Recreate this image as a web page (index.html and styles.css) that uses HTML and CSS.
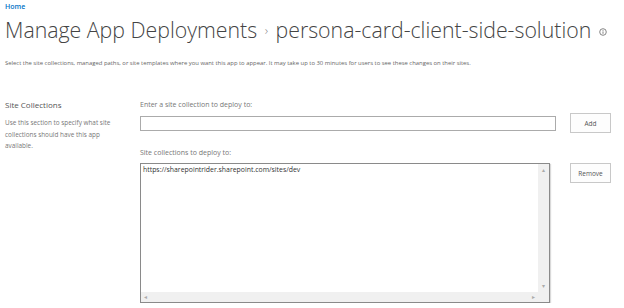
FILE: index.html
```html
<!DOCTYPE html>
<html lang="en">
<head>
    <meta charset="UTF-8">
    <title>Manage App Deployments</title>
    <link rel="stylesheet" href="styles.css">
</head>
<body>
    <div class="breadcrumb"><a href="#">Home</a></div>
    <h1 class="title">
        Manage App Deployments
        <span class="sep">&rsaquo;</span>
        persona-card-client-side-solution
        <svg class="info" width="8" height="8" viewBox="0 0 8 8">
            <circle cx="4" cy="4" r="3.3" fill="none" stroke="#777" stroke-width="0.9"/>
            <rect x="3.55" y="3.4" width="0.9" height="2.4" fill="#777"/>
            <rect x="3.55" y="2.1" width="0.9" height="0.8" fill="#777"/>
        </svg>
    </h1>
    <p class="desc">Select the site collections, managed paths, or site templates where you want this app to appear. It may take up to 30 minutes for users to see these changes on their sites.</p>

    <div class="section">
        <div class="section-info">
            <h3>Site Collections</h3>
            <p>Use this section to specify what site collections should have this app available.</p>
        </div>
        <div class="section-body">
            <label>Enter a site collection to deploy to:</label>
            <div class="row add-row">
                <input type="text" class="site-input">
                <button class="btn">Add</button>
            </div>
            <label class="second">Site collections to deploy to:</label>
            <div class="row list-row">
                <div class="listbox">
                    <div class="list-content">https://sharepointrider.sharepoint.com/sites/dev</div>
                    <div class="vbar"><span>&#9652;</span><span>&#9662;</span></div>
                    <div class="hbar"><span>&#9666;</span><span>&#9656;</span></div>
                    <div class="corner"></div>
                </div>
                <button class="btn">Remove</button>
            </div>
        </div>
    </div>
</body>
</html>
```

FILE: styles.css
```css
body {
    margin: 0;
    padding: 0 5px;
    font-family: "Open Sans", "Noto Sans", sans-serif;
    color: #444;
    background-color: white;
}
.breadcrumb {
    padding-top: 2px;
    font-size: 7px;
    line-height: 10px;
    font-weight: 600;
}
.breadcrumb a {
    color: #0072c6;
    text-decoration: none;
}
.title {
    margin: 3px 0 0;
    font-size: 21.3px;
    font-weight: 300;
    line-height: 30px;
    color: #444;
    white-space: nowrap;
}
.title .sep {
    font-size: 13px;
    color: #888;
    vertical-align: 3px;
    margin: 0 2px;
}
.title .info {
    vertical-align: 2px;
    margin-left: 2px;
}
.desc {
    margin: 13px 0 0;
    font-size: 5.9px;
    line-height: 10px;
    color: #666;
    white-space: nowrap;
}
.section {
    display: flex;
    margin-top: 32px;
}
.section-info {
    width: 135px;
    flex: none;
}
.section-info h3 {
    margin: 0;
    font-size: 8px;
    font-weight: normal;
    line-height: 10px;
    color: #555;
}
.section-info p {
    margin: 7px 0 0;
    width: 120px;
    font-size: 6.4px;
    line-height: 11.5px;
    color: #777;
}
.section-body {
    flex: 1;
}
.section-body label {
    display: block;
    font-size: 7px;
    line-height: 10px;
    color: #777;
}
.section-body label.second {
    margin-top: 15px;
}
.row {
    display: flex;
    align-items: flex-start;
}
.add-row {
    align-items: center;
    gap: 14px;
    margin-top: 3px;
}
.list-row {
    gap: 20px;
    margin-top: 5px;
}
.site-input {
    width: 416px;
    height: 15px;
    box-sizing: border-box;
    margin: 0;
    border: 1px solid #ababab;
    padding: 0 3px;
    background: white;
}
.btn {
    width: 41px;
    height: 20px;
    padding: 0;
    margin: 0;
    font-family: inherit;
    font-size: 6.5px;
    color: #555;
    background-color: #fdfdfd;
    border: 1px solid #c8c8c8;
}
.listbox {
    width: 410px;
    height: 140px;
    box-sizing: border-box;
    border: 1px solid #8a8a8a;
    box-shadow: 1px 1px 1px rgba(0, 0, 0, 0.15);
    display: grid;
    grid-template-columns: 1fr 11px;
    grid-template-rows: 1fr 10px;
}
.list-content {
    padding: 1px 2px;
    font-size: 6.9px;
    line-height: 10px;
    color: #333;
}
.vbar,
.hbar {
    display: flex;
    justify-content: space-between;
    background-color: #f0f0f0;
    color: #aaa;
    font-size: 6px;
    line-height: 10px;
}
.vbar {
    flex-direction: column;
    align-items: center;
    padding: 1px 0;
}
.hbar {
    align-items: center;
    padding: 0 3px;
}
.corner {
    background-color: #f0f0f0;
}
```
